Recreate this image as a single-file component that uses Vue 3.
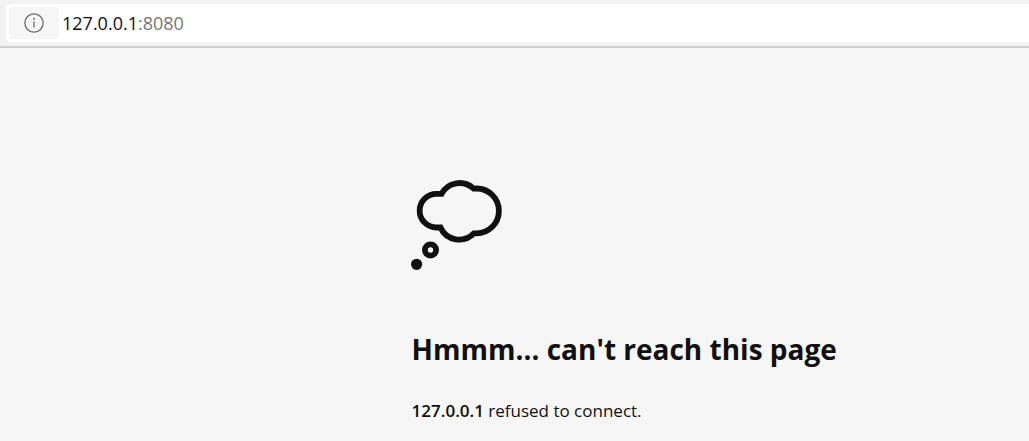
<script setup>
const host = '127.0.0.1'
const port = ':8080'
</script>

<template>
  <div class="browser">
    <header class="toolbar">
      <div class="address">
        <button class="info" type="button" aria-label="View site information">
          <svg width="20" height="20" viewBox="0 0 20 20" fill="none" stroke="#6b6b6b" stroke-width="1.3">
            <circle cx="10" cy="10" r="9.2" />
            <path d="M10 8.500v6" />
            <circle cx="10" cy="5.8" r="1" fill="#6b6b6b" stroke="none" />
          </svg>
        </button>
        <div class="url">{{ host }}<span class="port">{{ port }}</span></div>
      </div>
    </header>
    <main class="page">
      <div class="content">
        <svg class="cloud" width="92" height="92" viewBox="1 0 92 92" fill="none" stroke="#101010">
          <path stroke-width="5.8" d="M30.500 14.800H25.500A16.800 16.800 0 0 0 25.500 48.500H29.500A20.500 20.500 0 0 0 63 54.300H65.500A22.400 22.400 0 0 0 65.500 9.500H62.500A20.500 20.500 0 0 0 30.500 14.800Z" />
          <circle cx="19.500" cy="71" r="5.6" stroke-width="5.8" />
          <circle cx="5.600" cy="85.300" r="5.600" fill="#101010" stroke="none" />
        </svg>
        <h1>Hmmm… can't reach this page</h1>
        <p><strong>{{ host }}</strong> refused to connect.</p>
      </div>
    </main>
  </div>
</template>

<style>
body {
  margin: 0;
  background: #f6f6f6;
}
</style>

<style scoped>
.browser {
  font-family: "Segoe UI", "Open Sans", "Noto Sans", sans-serif;
  color: #101010;
}
.toolbar {
  padding: 4px 0 4px 6px;
  background: #f3f3f3;
  border-bottom: 2px solid #d0d0d0;
}
.address {
  display: flex;
  align-items: center;
  gap: 3px;
  height: 38px;
  padding-left: 3px;
  background: #fff;
  border-radius: 4px 0 0 4px;
}
.info {
  display: flex;
  align-items: center;
  justify-content: center;
  width: 50px;
  height: 32px;
  padding: 0;
  border: 0;
  border-radius: 3px;
  background: #f6f6f6;
}
.url {
  font-size: 18px;
  line-height: 24px;
}
.port {
  color: #767676;
}
.page {
  padding: 131px 20px 16px 40%;
}
.cloud {
  display: block;
  overflow: visible;
}
h1 {
  margin: 58px 0 0;
  font-size: 28px;
  line-height: 40px;
  font-weight: 700;
}
p {
  margin: 30px 0 0;
  font-size: 17px;
  line-height: 24px;
}
strong {
  font-weight: 600;
}
</style>
